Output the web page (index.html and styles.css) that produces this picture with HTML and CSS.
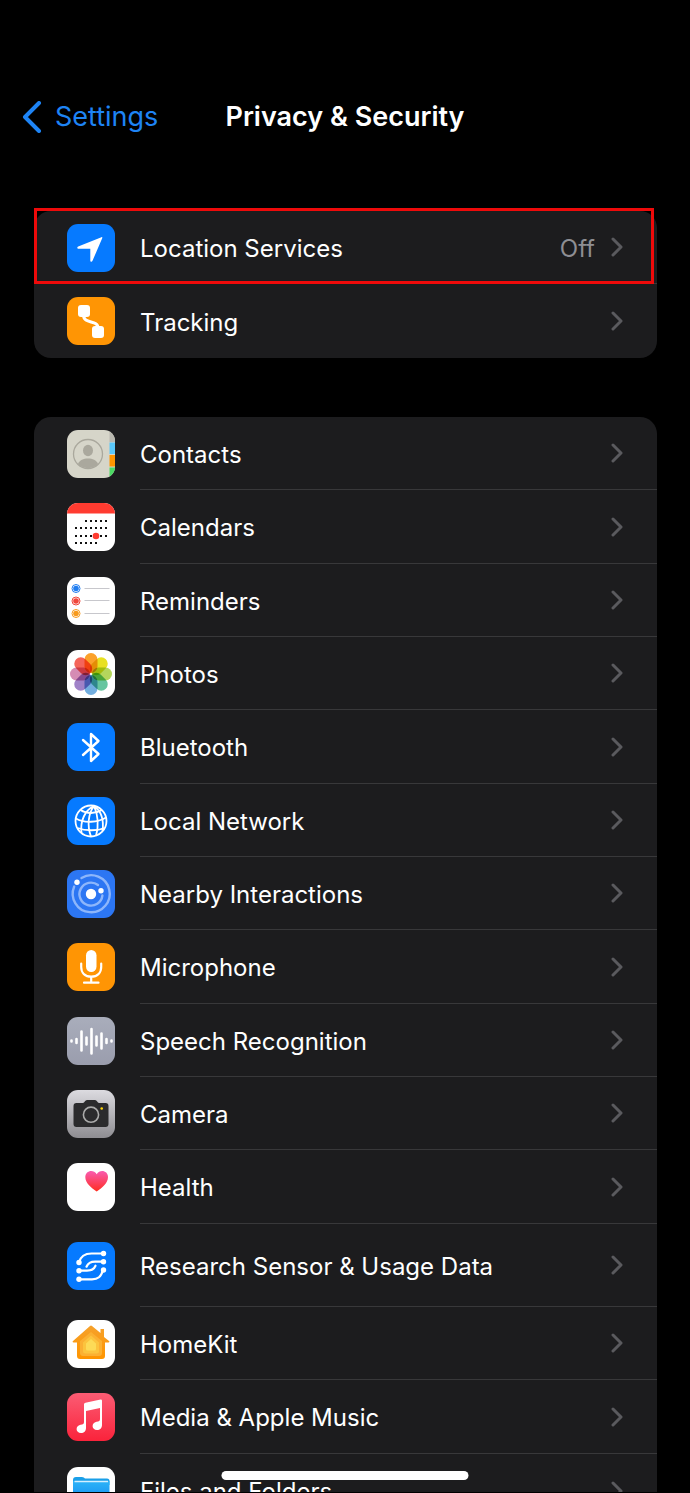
FILE: index.html
```html
<!DOCTYPE html>
<html lang="en">
  <head>
    <meta charset="UTF-8" />
    <meta name="viewport" content="width=device-width, initial-scale=1.0" />
    <title>Privacy &amp; Security</title>
    <link rel="stylesheet" href="styles.css">
  </head>
  <body>
    <svg class="defs" aria-hidden="true">
      <symbol id="chevron" viewBox="0 0 12 20">
        <path d="M2 2l8 8-8 8" fill="none" stroke="currentColor" stroke-width="3" stroke-linecap="round" stroke-linejoin="round" />
      </symbol>
      <linearGradient id="cameraBg" x2="0" y2="1"><stop stop-color="#dcdbe0" /><stop offset="1" stop-color="#8e8d92" /></linearGradient>
      <linearGradient id="speechBg" x2="0" y2="1"><stop stop-color="#a9adbb" /><stop offset="1" stop-color="#9a9dad" /></linearGradient>
      <linearGradient id="heart" x2="0" y2="1"><stop stop-color="#f95bb0" /><stop offset="1" stop-color="#ff2d20" /></linearGradient>
      <linearGradient id="musicBg" x2="0" y2="1"><stop stop-color="#fb5c74" /><stop offset="1" stop-color="#fa233b" /></linearGradient>
      <linearGradient id="home" x2="0" y2="1"><stop stop-color="#f5a12c" /><stop offset="1" stop-color="#ff9500" /></linearGradient>
      <linearGradient id="folder" x2="0" y2="1"><stop stop-color="#2cb4f8" /><stop offset="1" stop-color="#1184ee" /></linearGradient>
    </svg>

    <div class="screen">
      <header class="navbar">
        <a class="back" href="#">
          <svg class="back-icon" viewBox="0 0 20 32"><path d="M17 2L3 16l14 14" fill="none" stroke="currentColor" stroke-width="4" stroke-linecap="round" stroke-linejoin="round" /></svg>
          Settings
        </a>
        <h1>Privacy &amp; Security</h1>
      </header>

      <main>
        <ul class="group">
          <li class="highlight">
            <a class="row" href="#">
              <svg class="icon blue" viewBox="0 0 48 48"><path d="M34.4 13.2c.7-.3 1.200.2.900.9L25.500 36.800c-.6 1.400-2.200 1.100-2.200-.3V24.700H11.500c-1.400 0-1.700-1.500-.3-2.100z" fill="#fff" /></svg>
              <span class="body"><span class="label">Location Services</span><span class="value">Off</span><svg class="chevron"><use href="#chevron" /></svg></span>
            </a>
          </li>
          <li>
            <a class="row" href="#">
              <svg class="icon orange" viewBox="0 0 48 48">
                <rect x="11" y="8" width="12" height="12" rx="3" fill="#fff" />
                <rect x="25" y="29" width="12" height="12" rx="3" fill="#fff" />
                <path d="M16.500 18c0 10 14.500 4 14.500 13" fill="none" stroke="#fff" stroke-width="3" />
              </svg>
              <span class="body"><span class="label">Tracking</span><svg class="chevron"><use href="#chevron" /></svg></span>
            </a>
          </li>
        </ul>

        <ul class="group">
          <li>
            <a class="row" href="#">
              <svg class="icon contacts" viewBox="0 0 48 48">
                <path d="M42.500 0H48v12h-5.500z" fill="#b9b8b0" />
                <path d="M42.500 12.500H48v11.500h-5.500z" fill="#5ac8fa" />
                <path d="M42.500 25H48v11.500h-5.500z" fill="#ff9500" />
                <path d="M42.500 37.500H48V48h-5.500z" fill="#4cd964" />
                <circle cx="21" cy="24" r="14.5" fill="none" stroke="#aaa89d" stroke-width="1.3" />
                <ellipse cx="21" cy="20.5" rx="5" ry="5.8" fill="#aaa89d" />
                <path d="M11 34c1.500-4 5.500-5.500 10-5.500S29.500 30 31 34c-5 5.500-15 5.500-20 0z" fill="#aaa89d" />
              </svg>
              <span class="body"><span class="label">Contacts</span><svg class="chevron"><use href="#chevron" /></svg></span>
            </a>
          </li>
          <li>
            <a class="row" href="#">
              <svg class="icon white" viewBox="0 0 48 48">
                <path d="M0 0h48v10.500H0z" fill="#ff3b30" />
                <path d="M18 18h24M8 25h34M8 33h34M8 40h24" stroke="#111" stroke-width="2" stroke-dasharray="2 3" />
                <circle cx="29" cy="33" r="3.3" fill="#ff3b30" />
              </svg>
              <span class="body"><span class="label">Calendars</span><svg class="chevron"><use href="#chevron" /></svg></span>
            </a>
          </li>
          <li>
            <a class="row" href="#">
              <svg class="icon white" viewBox="0 0 48 48">
                <path d="M17.500 11.500h25M17.500 23.500h25M17.500 36.500h25" stroke="#c7c7cc" />
                <g fill="none">
                  <circle cx="9" cy="11.5" r="4" stroke="#1e7cf0" /><circle cx="9" cy="24" r="4" stroke="#f0473c" /><circle cx="9" cy="36.5" r="4" stroke="#f79a1d" />
                </g>
                <circle cx="9" cy="11.5" r="2.8" fill="#1e7cf0" /><circle cx="9" cy="24" r="2.8" fill="#f0473c" /><circle cx="9" cy="36.5" r="2.8" fill="#f79a1d" />
              </svg>
              <span class="body"><span class="label">Reminders</span><svg class="chevron"><use href="#chevron" /></svg></span>
            </a>
          </li>
          <li>
            <a class="row" href="#">
              <svg class="icon white photos" viewBox="0 0 48 48">
                <rect x="17.5" y="3" width="13" height="20" rx="6.5" fill="#fba12b" />
                <rect x="17.5" y="3" width="13" height="20" rx="6.5" fill="#e8e021" transform="rotate(45 24 24)" />
                <rect x="17.5" y="3" width="13" height="20" rx="6.5" fill="#b4d65c" transform="rotate(90 24 24)" />
                <rect x="17.5" y="3" width="13" height="20" rx="6.5" fill="#67c5a0" transform="rotate(135 24 24)" />
                <rect x="17.5" y="3" width="13" height="20" rx="6.5" fill="#72aedf" transform="rotate(180 24 24)" />
                <rect x="17.5" y="3" width="13" height="20" rx="6.5" fill="#a082c8" transform="rotate(225 24 24)" />
                <rect x="17.5" y="3" width="13" height="20" rx="6.5" fill="#d58cb4" transform="rotate(270 24 24)" />
                <rect x="17.5" y="3" width="13" height="20" rx="6.5" fill="#f4655a" transform="rotate(315 24 24)" />
              </svg>
              <span class="body"><span class="label">Photos</span><svg class="chevron"><use href="#chevron" /></svg></span>
            </a>
          </li>
          <li>
            <a class="row" href="#">
              <svg class="icon blue" viewBox="0 0 48 48"><path d="M16 17l15.500 14-7.500 7V11l7.500 7L16 32" fill="none" stroke="#fff" stroke-width="2.4" stroke-linecap="round" stroke-linejoin="round" /></svg>
              <span class="body"><span class="label">Bluetooth</span><svg class="chevron"><use href="#chevron" /></svg></span>
            </a>
          </li>
          <li>
            <a class="row" href="#">
              <svg class="icon blue" viewBox="0 0 48 48">
                <g fill="none" stroke="#fff" stroke-width="1.8">
                  <circle cx="24" cy="24" r="15.5" />
                  <path d="M27 9C18 13 13 24 14.500 36M27 9c-6 8-7 20-3 30.500M27 9c4 8 5 20 2 30M27 9c7 5 10 14 8.500 25" />
                  <path d="M13.500 13c6 4 15 4 21.500 0M9 21.500c8 5 22 4 30-1M10.500 31c8 3 20 3 27 0" />
                </g>
              </svg>
              <span class="body"><span class="label">Local Network</span><svg class="chevron"><use href="#chevron" /></svg></span>
            </a>
          </li>
          <li>
            <a class="row" href="#">
              <svg class="icon nearby" viewBox="0 0 48 48">
                <g fill="none" stroke="#8db6fb" stroke-width="2.4" stroke-linecap="round">
                  <path d="M14.500 8a18.500 18.500 0 1 1-7.300 8.500" />
                  <path d="M35.400 25.500A11.500 11.500 0 1 1 31 15" />
                </g>
                <g fill="#fff"><circle cx="24" cy="24" r="5.2" /><circle cx="10" cy="12.3" r="2.7" /><circle cx="34" cy="20.8" r="2.7" /></g>
              </svg>
              <span class="body"><span class="label">Nearby Interactions</span><svg class="chevron"><use href="#chevron" /></svg></span>
            </a>
          </li>
          <li>
            <a class="row" href="#">
              <svg class="icon orange" viewBox="0 0 48 48">
                <rect x="19" y="7" width="10.5" height="22" rx="5.25" fill="#fff" />
                <path d="M14.200 20.500v3.500c0 6 4 9.700 10 9.700s10-3.700 10-9.700v-3.500M24.200 34v5.500M17 39.700h14.500" fill="none" stroke="#fff" stroke-width="2.2" stroke-linecap="round" />
              </svg>
              <span class="body"><span class="label">Microphone</span><svg class="chevron"><use href="#chevron" /></svg></span>
            </a>
          </li>
          <li>
            <a class="row" href="#">
              <svg class="icon" viewBox="0 0 48 48">
                <path d="M0 0h48v48H0z" fill="url(#speechBg)" />
                <path d="M4.500 23.500v1M9.500 22v4M14.500 14.500v19M19.500 20.500v7M24.500 12v24.500M29.500 19.500v9M34.500 16.500v15M39.500 22v4M44.500 23.500v1" stroke="#fff" stroke-width="2.6" stroke-linecap="round" />
              </svg>
              <span class="body"><span class="label">Speech Recognition</span><svg class="chevron"><use href="#chevron" /></svg></span>
            </a>
          </li>
          <li>
            <a class="row" href="#">
              <svg class="icon" viewBox="0 0 48 48">
                <path d="M0 0h48v48H0z" fill="url(#cameraBg)" />
                <path d="M9.500 13H16c1.500 0 2-3 4-3h8c2 0 2.500 3 4 3h6.500c2 0 3 1 3 3v18c0 2-1 3-3 3h-29c-2 0-3-1-3-3V16c0-2 1-3 3-3z" fill="#2b2b2d" />
                <circle cx="24" cy="24.7" r="7.6" fill="none" stroke="#aaa" stroke-width="1.6" />
                <circle cx="34.7" cy="18.5" r="1.3" fill="#ffd60a" />
              </svg>
              <span class="body"><span class="label">Camera</span><svg class="chevron"><use href="#chevron" /></svg></span>
            </a>
          </li>
          <li>
            <a class="row" href="#">
              <svg class="icon white" viewBox="0 0 48 48"><path d="M29.700 28.500C24 24.500 18.300 20 18.300 14c0-6.500 8.200-8.200 11.400-2.800C32.900 5.800 41 7.500 41 14c0 6-5.600 10.500-11.300 14.500z" fill="url(#heart)" /></svg>
              <span class="body"><span class="label">Health</span><svg class="chevron"><use href="#chevron" /></svg></span>
            </a>
          </li>
          <li>
            <a class="row tall" href="#">
              <svg class="icon blue" viewBox="0 0 48 48">
                <path d="M36 11.500H24.500c-7 0-11 3-12.500 9M36 19.700h-8c-4.500 0-7 1.500-8.500 5M12 28.700h8c4.500 0 7-1.500 8.500-5M36 28c-2 7-5 9.300-11 9.300H12" fill="none" stroke="#fff" stroke-width="2.2" stroke-linecap="round" />
                <g fill="#fff"><circle cx="36.5" cy="11.5" r="2.7" /><circle cx="36.5" cy="19.7" r="2.7" /><circle cx="36.5" cy="28" r="2.7" /><circle cx="12" cy="20.5" r="2.7" /><circle cx="12" cy="28.7" r="2.7" /><circle cx="12" cy="37.3" r="2.7" /></g>
              </svg>
              <span class="body"><span class="label">Research Sensor &amp; Usage Data</span><svg class="chevron"><use href="#chevron" /></svg></span>
            </a>
          </li>
          <li>
            <a class="row" href="#">
              <svg class="icon white" viewBox="0 0 48 48">
                <path d="M33.500 9h3.500v8l5 4c.8.7.3 1.500-.5 1.500H38V36c0 2-1 3-3 3H13c-2 0-3-1-3-3V22.500H6.500c-.8 0-1.300-.8-.5-1.500L23 6q1-.8 2 0l8.500 7z" fill="url(#home)" />
                <path d="M24 12l11 9v12q0 3-3 3H16q-3 0-3-3V21z" fill="#fbb033" />
                <path d="M24 15.500l8 7V31q0 2.500-2.500 2.500h-11Q16 33.500 16 31v-8.500z" fill="#fcc43e" />
                <path d="M24 19l5 4.500V29q0 1.500-1.500 1.500h-7Q19 30.500 19 29v-5.500z" fill="#fddb57" />
              </svg>
              <span class="body"><span class="label">HomeKit</span><svg class="chevron"><use href="#chevron" /></svg></span>
            </a>
          </li>
          <li>
            <a class="row" href="#">
              <svg class="icon" viewBox="0 0 48 48">
                <path d="M0 0h48v48H0z" fill="url(#musicBg)" />
                <path d="M17 11.500q0-1.500 1.500-1.800l15-3.200q1.500-.3 1.500 1.200V32c0 3-2 5-5 5-5.500 0-6-7-.5-8.200 2.500-.5 3.500-.8 3.500-2.800V15l-14 3v17c0 3-2 5-5 5-5.500 0-6-7-.5-8.200 2.500-.5 3.500-.8 3.500-2.800z" fill="#fff" />
              </svg>
              <span class="body"><span class="label">Media &amp; Apple Music</span><svg class="chevron"><use href="#chevron" /></svg></span>
            </a>
          </li>
          <li>
            <a class="row" href="#">
              <svg class="icon white" viewBox="0 0 48 48">
                <path d="M6 13q0-3 3-3h6q2 0 3 1.500h22q2.500 0 2.500 2.500v4H6z" fill="#1a9fe8" />
                <path d="M6 14h36.500v21q0 3-3 3H9q-3 0-3-3z" fill="url(#folder)" />
                <path d="M7.500 14.500h33.500" stroke="#d5f0ff" stroke-width="1.5" />
              </svg>
              <span class="body"><span class="label">Files and Folders</span><svg class="chevron"><use href="#chevron" /></svg></span>
            </a>
          </li>
        </ul>
      </main>

      <div class="home-indicator"></div>
    </div>
  </body>
</html>
```
FILE: styles.css
```css
* {
  box-sizing: border-box;
}
body {
  margin: 0;
  background-color: #000;
  color: #fff;
  font-family: Inter, "Liberation Sans", sans-serif;
}
a {
  color: inherit;
  text-decoration: none;
}
.defs {
  position: absolute;
  width: 0;
  height: 0;
}
.screen {
  position: relative;
  height: 100vh;
  overflow: hidden;
  border-bottom: 1px solid #000;
}

/* nav bar */
.navbar {
  display: grid;
  grid-template-columns: 1fr auto 1fr;
  align-items: center;
  padding: 97px 22px 0;
}
.navbar h1 {
  margin: 0;
  font-size: 27px;
  font-weight: 600;
  line-height: 40px;
}
.back {
  display: flex;
  align-items: center;
  gap: 13px;
  color: #1e84f5;
  font-size: 27px;
  line-height: 40px;
}
.back-icon {
  width: 20px;
  height: 32px;
}

/* grouped lists */
main {
  padding: 74px 33px 0 34px;
}
.group {
  margin: 0 0 59px;
  padding: 0;
  list-style: none;
  background-color: #1c1c1e;
  border-radius: 17px;
}
.row {
  display: flex;
  align-items: center;
  gap: 25px;
  height: 73px;
  padding-left: 33px;
}
li:nth-child(3n + 2) .row {
  height: 74px;
}
.row.tall {
  height: 83px;
}
li:nth-child(3n) .row.tall {
  height: 83px;
}
.body {
  display: flex;
  flex: 1;
  align-items: center;
  align-self: stretch;
  padding-right: 34px;
  border-bottom: 1px solid #38383a;
}
li:last-child .body {
  border-bottom: none;
}
.label,
.value {
  padding-top: 3px;
  font-size: 24px;
  line-height: 32px;
}
.label {
  flex: 1;
}
.value {
  margin-right: 16px;
  color: #8e8e93;
}
.chevron {
  width: 12px;
  height: 20px;
  color: #5a5a5e;
}

.icon {
  width: 48px;
  height: 48px;
  border-radius: 11px;
}
.blue {
  background-color: #067aff;
}
.orange {
  background-color: #ff9504;
}
.white {
  background-color: #fff;
}
.contacts {
  background-color: #d6d5c9;
}
.nearby {
  background-color: #2c76f3;
}
.photos {
  isolation: isolate;
}
.photos rect {
  mix-blend-mode: multiply;
}

/* red frame around the highlighted item */
.highlight {
  position: relative;
}
.highlight::after {
  content: "";
  position: absolute;
  inset: -3px 3px 0 0;
  border: 3px solid #ee0a0a;
  pointer-events: none;
}

.home-indicator {
  position: absolute;
  bottom: 12px;
  left: 50%;
  width: 247px;
  height: 9px;
  border-radius: 5px;
  background-color: #fff;
  transform: translateX(-50%);
}
```
